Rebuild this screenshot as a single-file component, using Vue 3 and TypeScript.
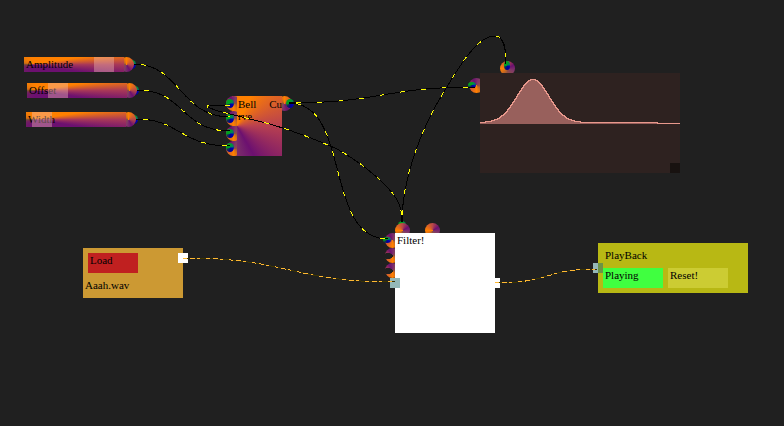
<script setup lang="ts">
import { reactive } from 'vue'

interface Knob {
  id: string
  label: string
  x: number
  y: number
  value: number
}

const knobs = reactive<Knob[]>([
  { id: 'amplitude', label: 'Amplitude', x: 24, y: 57, value: 87 },
  { id: 'offset', label: 'Offset', x: 27, y: 83, value: 26 },
  { id: 'width', label: 'Width', x: 26, y: 112, value: 8 },
])

const controlWires: string[] = [
  'M134 64 C180 64 180 117 230 117',
  'M137 90 C185 90 180 131 230 131',
  'M136 119 C180 119 180 146 230 146',
  'M402 222 C402 205 397 198 388 188 C371 170 353 158 337 149 C315 139 290 130 270 124 L242 117 L218 111 L207 107 V105 H230',
  'M289 103 C380 103 385 87 475 87',
  'M289 103 C352 103 323 239 388 239',
  'M402 222 C402 180 420 130 445 90 C462 62 478 36 495 36 C504 36 506 48 506 64',
]

const audioWires: string[] = [
  'M183 258 C290 258 290 282 395 282',
  'M495 283 C550 283 545 269 597 269',
]

// Gaussian sampled across the plot, drawn above the centre line.
const samples = Array.from({ length: 201 }, (_, x) => {
  const base = x < 178 ? 49 : 50
  const height = 43 * Math.exp(-((x - 53) ** 2) / (2 * 16 ** 2))
  return `${x},${Math.round(base - height) + 0.5}`
})
const curve = samples.join(' ')
const area = `0,51 ${curve} 178,51`
</script>

<template>
  <main class="canvas">
    <div
      v-for="k in knobs"
      :key="k.id"
      class="knob"
      :style="{ left: k.x + 'px', top: k.y + 'px' }"
    >
      <i class="plug"></i>
      <label :for="k.id">{{ k.label }}</label>
      <input :id="k.id" v-model.number="k.value" type="range" min="0" max="100" />
      <span class="port out"></span>
    </div>

    <section class="bell">
      <div class="ports column">
        <span v-for="n in 4" :key="n" class="port in"></span>
      </div>
      <h2><span class="line"><span>Bell</span> <span>Cu</span></span>rve</h2>
      <span class="port out"></span>
    </section>

    <section class="plot">
      <span class="port in"></span>
      <span class="port up"></span>
      <svg viewBox="0 0 200 100" aria-hidden="true">
        <polygon :points="area" fill="#98605c" />
        <polyline :points="curve" fill="none" stroke="#e8988c" />
      </svg>
      <i class="grip"></i>
    </section>

    <i class="plug filter-top"></i>
    <section class="filter">
      <div class="ports column">
        <span v-for="n in 3" :key="n" class="port in"></span>
      </div>
      <div class="ports row">
        <span v-for="n in 2" :key="n" class="port up"></span>
      </div>
      <h2>Filter!</h2>
      <i class="jack input"></i>
      <i class="jack output"></i>
    </section>

    <section class="loader">
      <button type="button" class="load">Load</button>
      <p>Aaah.wav</p>
      <i class="jack output"></i>
    </section>

    <section class="playback">
      <h2>PlayBack</h2>
      <div class="actions">
        <button type="button" class="play">Playing</button>
        <button type="button" class="reset">Reset!</button>
      </div>
      <i class="jack input"></i>
    </section>

    <i class="plug bell-a"></i>
    <i class="plug bell-b"></i>
    <i class="plug bell-c"></i>
    <i class="plug bell-d"></i>
    <i class="plug bell-out"></i>
    <i class="plug side plot-in"></i>
    <i class="plug plot-top"></i>
    <i class="plug side filter-in"></i>

    <svg class="wires" aria-hidden="true">
      <g v-for="d in controlWires" :key="d">
        <path :d="d" stroke="#000" />
        <path :d="d" stroke="#ffff00" stroke-dasharray="5 16" stroke-dashoffset="-7" />
      </g>
      <g v-for="d in audioWires" :key="d">
        <path :d="d" stroke="#3c3400" />
        <path :d="d" stroke="#ffb833" stroke-dasharray="4 3 5 2 3 6" />
      </g>
    </svg>
  </main>
</template>

<style>
body {
  margin: 0;
  background: #202020;
}
</style>

<style scoped>
.canvas {
  position: relative;
  min-height: 100vh;
  overflow: hidden;
  background: #202020;
  color: #000;
  font: 11px/12px "Liberation Serif", serif;
}

h2,
p {
  margin: 0;
  font: inherit;
}

button {
  margin: 0;
  padding: 1px 2px;
  border: 0;
  color: inherit;
  font: inherit;
  text-align: left;
  display: flex;
}

.knob,
.bell,
.plot,
.filter,
.loader,
.playback {
  position: absolute;
}

.knob {
  width: 100px;
  height: 15px;
}

.knob::before {
  content: "";
  position: absolute;
  left: 0;
  top: 0;
  width: 100px;
  height: 100px;
  transform: scaleY(0.15);
  transform-origin: top;
  background: conic-gradient(at 8% 50%, #ff8000, #ff8000 45deg, #a83858 90deg, #6c1070 135deg, #6c1070 180deg, #805030 270deg, #ff8000);
}

.knob label {
  position: absolute;
  left: 2px;
  top: 1px;
}

.knob input {
  appearance: none;
  position: absolute;
  inset: 0;
  width: 100px;
  height: 15px;
  margin: 0;
  background: transparent;
}

.knob input::-webkit-slider-thumb {
  appearance: none;
  width: 20px;
  height: 15px;
  background: rgba(240, 190, 180, 0.4);
}

.port {
  display: block;
  width: 15px;
  height: 15px;
  border-radius: 50%;
  background: conic-gradient(from var(--turn), #ff8000, #b84848 90deg, #6c1070 150deg, #803868 200deg, #905040 270deg, #ff8000);
}

.port.out {
  --turn: 0deg;
  position: absolute;
  clip-path: inset(0 0 0 5px);
}

.port.in {
  --turn: 180deg;
}

.port.up {
  --turn: 270deg;
}

.knob .port.out {
  left: 95px;
  top: 0;
}

.plug {
  position: absolute;
  width: 8px;
  height: 9px;
  border-radius: 50%;
  background: conic-gradient(#00a020, #008060 70deg, #0000b0 110deg, #000090 180deg, #103050 230deg, #00a020 270deg);
}

.plug.side {
  width: 8px;
  height: 6px;
}

.ports {
  position: absolute;
  display: flex;
}

.ports.column {
  flex-direction: column;
}

.ports.row {
  gap: 15px;
}

.bell {
  left: 232px;
  top: 96px;
  width: 50px;
  min-height: 60px;
  background: conic-gradient(at 10% 50%, #ff8000, #ff8000 25deg, #b84050 90deg, #6c1070 150deg, #803868 190deg, #905040 270deg, #ff8000);
}

.bell .ports {
  left: -6px;
  top: 0;
  clip-path: inset(0 4px 0 0);
}

.bell h2 {
  position: relative;
  padding: 2px 0 0 6px;
}

.bell .line {
  display: flex;
  justify-content: space-between;
}

.bell .port.out {
  left: 45px;
  top: 0;
}

.plot {
  left: 480px;
  top: 73px;
  width: 200px;
}

.plot svg {
  position: relative;
  display: block;
  width: 200px;
  height: 100px;
  background: #2e2220;
  shape-rendering: crispEdges;
}

.plot .port {
  position: absolute;
}

.plot .in {
  left: -11px;
  top: 5px;
}

.plot .up {
  left: 20px;
  top: -12px;
}

.grip {
  position: absolute;
  right: 0;
  bottom: 0;
  width: 10px;
  height: 10px;
  background: #181210;
}

.filter {
  left: 395px;
  top: 233px;
  width: 100px;
  height: 100px;
}

.filter h2 {
  position: relative;
  height: 100%;
  padding: 1px 2px;
  box-sizing: border-box;
  background: #fff;
}

.filter .column {
  left: -10px;
  top: 0;
}

.filter .row {
  left: 0;
  top: -10px;
}

/* Free inputs show an empty socket. */
.filter .port.in + .port.in {
  background:
    radial-gradient(ellipse 5px 3px at 3px 8px, #202020 95%, transparent),
    conic-gradient(from 180deg, #ff8000, #b84848 90deg, #6c1070 150deg, #803868 200deg, #905040 270deg, #ff8000);
}

.jack {
  position: absolute;
  width: 10px;
  height: 10px;
}

.jack.input {
  left: -5px;
  background: #94b8b8;
}

.jack.output {
  right: -5px;
  background: #fff;
}

.filter .jack {
  top: 45px;
}

.loader {
  left: 83px;
  top: 248px;
  width: 100px;
  height: 50px;
  background: #cc9933;
}

.load {
  width: 50px;
  height: 20px;
  margin: 5px 5px 6px;
  background: #c02020;
}

.loader p {
  padding-left: 2px;
}

.loader .jack {
  top: 5px;
}

.playback {
  box-sizing: border-box;
  left: 598px;
  top: 243px;
  width: 150px;
  height: 50px;
  padding: 6px 5px 5px;
  background: #b8b814;
}

.playback h2 {
  padding: 0 2px 7px;
}

.actions {
  display: flex;
  gap: 5px;
}

.actions button {
  width: 60px;
  height: 20px;
}

.play {
  background: #40ff40;
}

.reset {
  background: #cccc33;
}

.playback .jack {
  top: 20px;
  background: linear-gradient(90deg, #94b8b8 50%, #6c9444 50%);
}

.knob .plug {
  left: 104px;
  top: 3px;
}

.bell-a,
.bell-b,
.bell-c,
.bell-d {
  left: 226px;
}

.bell-a {
  top: 99px;
}

.bell-b {
  top: 114px;
}

.bell-c {
  top: 129px;
}

.bell-d {
  top: 143px;
}

.bell-out {
  left: 286px;
  top: 99px;
}

.plot-in {
  left: 468px;
  top: 82px;
}

.plot-top {
  width: 6px;
  left: 504px;
  top: 61px;
}

.filter-in {
  left: 383px;
  top: 237px;
}

.filter-top {
  left: 398px;
  top: 221px;
}

.wires {
  position: absolute;
  inset: 0;
  width: 100%;
  height: 100%;
  pointer-events: none;
}

.wires path {
  fill: none;
  stroke-width: 1;
  shape-rendering: crispEdges;
}
</style>
